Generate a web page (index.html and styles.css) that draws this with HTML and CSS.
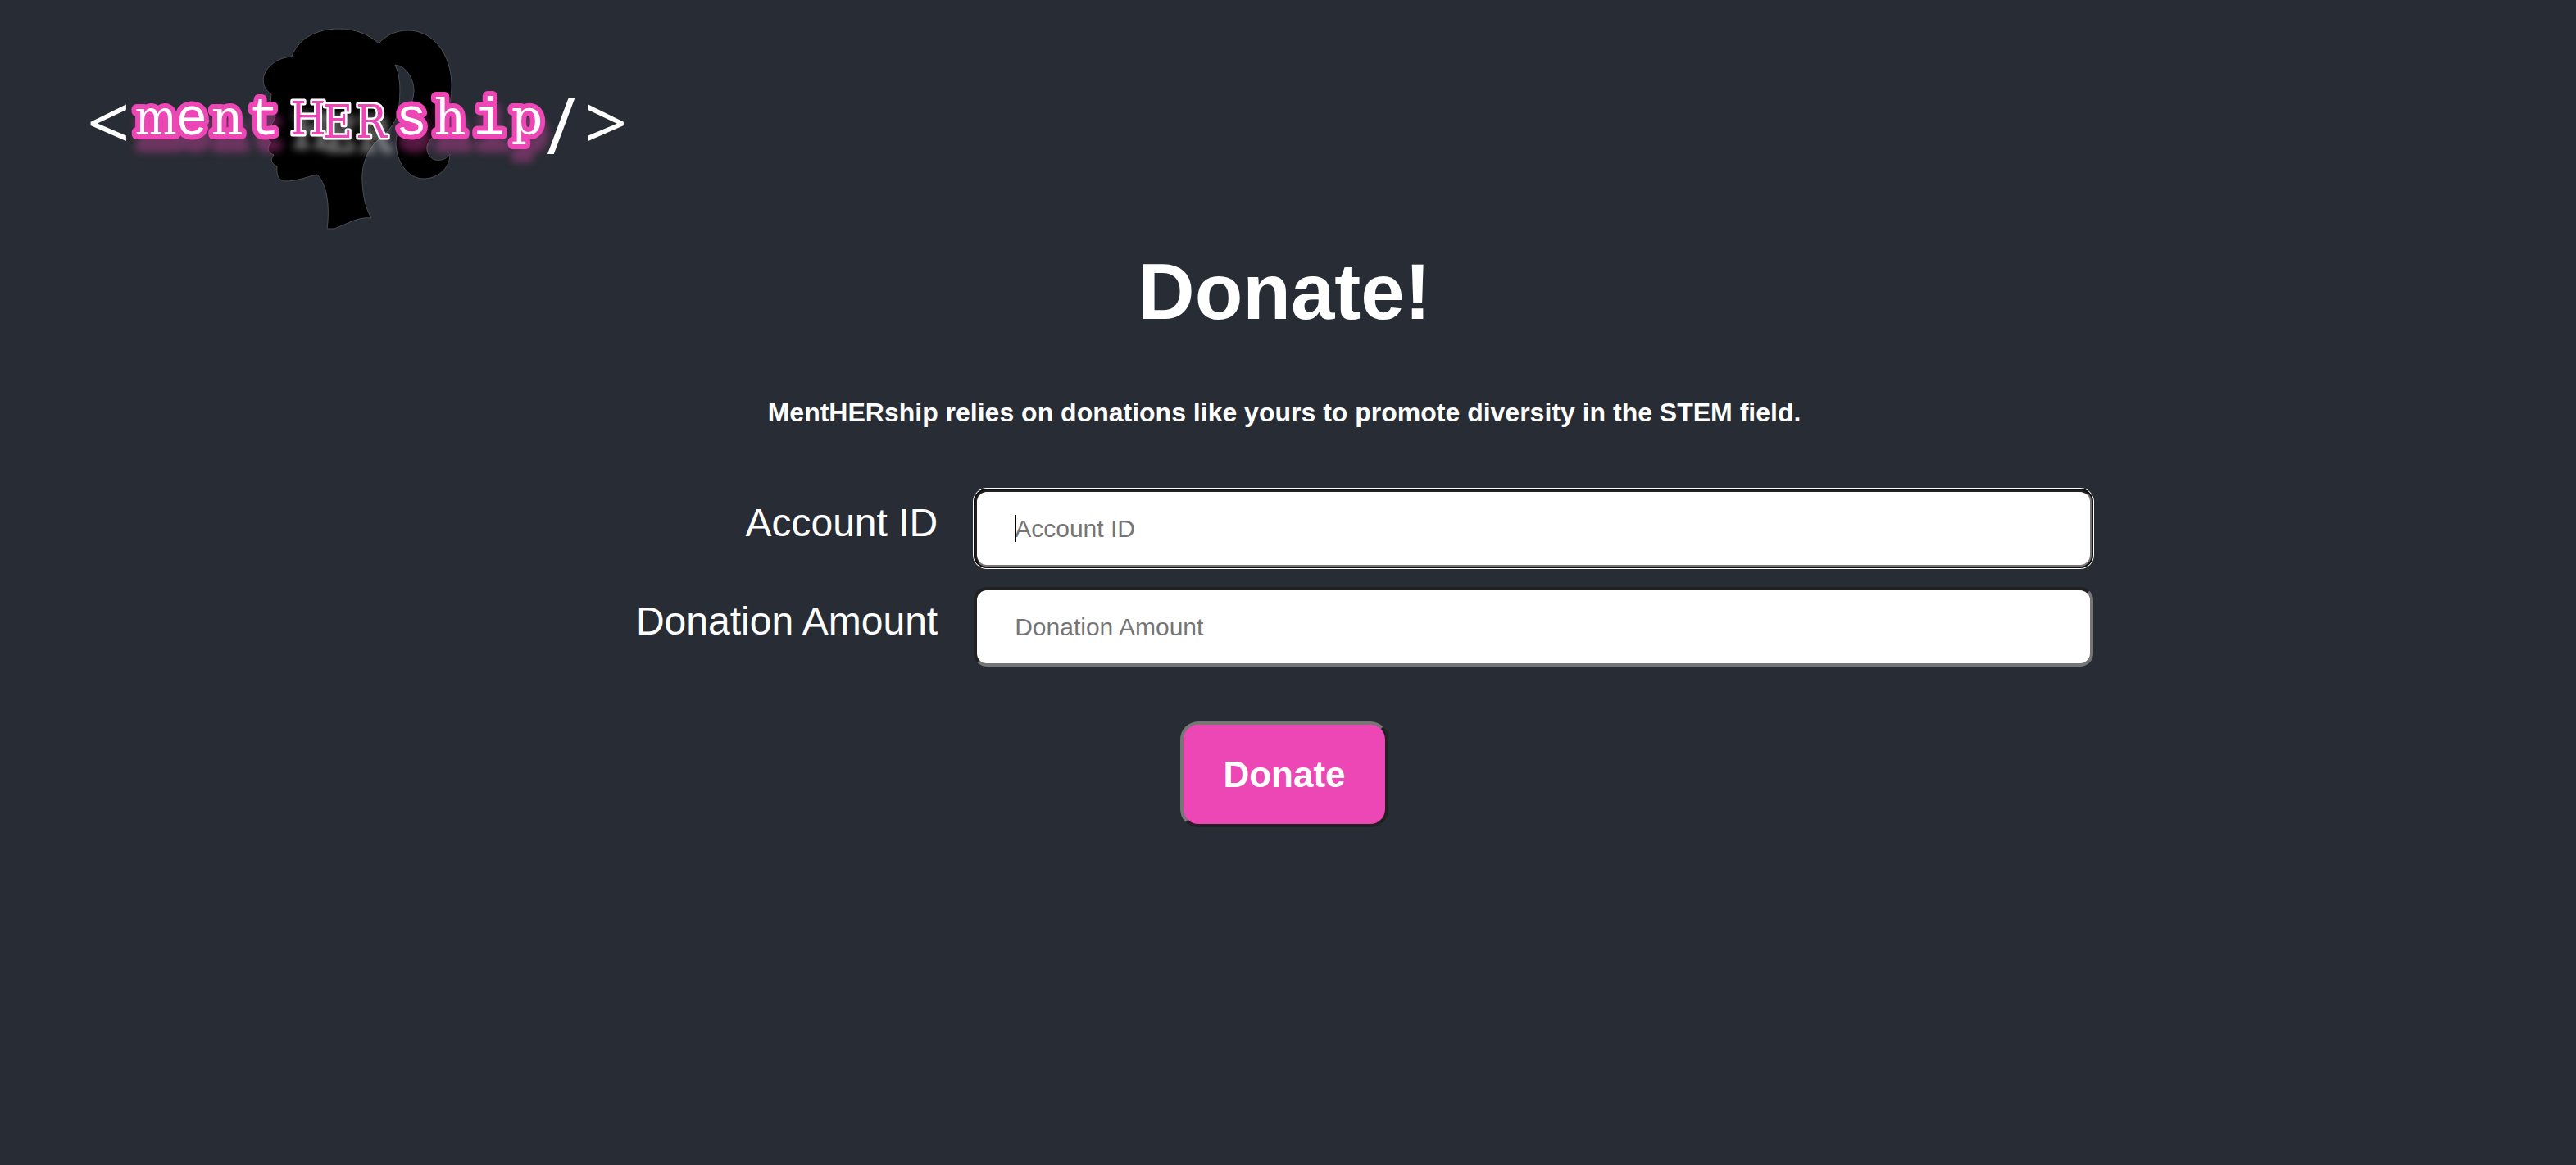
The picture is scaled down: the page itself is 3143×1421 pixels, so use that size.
FILE: index.html
```html
<!DOCTYPE html>
<html lang="en">
<head>
<meta charset="utf-8">
<title>MentHERship - Donate</title>
<link rel="stylesheet" href="styles.css">
</head>
<body>
<header class="site-header">
  <a class="logo-link" href="#" aria-label="MentHERship home">
    <svg class="logo" viewBox="100 30 670 256">
      <path class="head" d="M356 69C364 46 388 35 413 35C434 35 450 42 462 53C472 42 484 37 498 37C528 37 551 66 551 104C551 134 541 150 530 165C522 173 520 178 521 183C523 197 540 200 549 188C549 206 533 218 517 218C498 218 483 198 483 173C484 150 505 133 505 111C505 94 494 80 482 79C488 92 489 106 487 127C486 140 482 150 473 160L456 176C445 190 441 205 442 222C443 242 447 256 453 266C437 264 424 273 408 279H399C402 258 401 227 387 213C374 216 360 221 350 221C341 221 337 217 338 203C330 199 330 194 334 189C327 186 326 182 328 178L331 174L326 170C323 162 333 152 336 142C336 132 328 128 331 115C318 106 319 92 328 82C336 73 346 70 356 69Z"/>
      <text class="bracket" x="106" y="183">&lt;</text>
      <text class="slab" y="164" x="190 234 277 322">m<tspan class="mono">e</tspan><tspan class="wide">n</tspan><tspan class="mono">t</tspan></text>
      <text class="her" x="376 412 453" y="164 168 168">HER</text>
      <text class="slab" y="164" x="502 549 597 643"><tspan class="mono">s</tspan><tspan class="wide">h</tspan><tspan class="mono">i</tspan><tspan class="wide">p</tspan></text>
      <text class="bracket slash" x="667" y="188">/</text>
      <text class="bracket" x="713" y="183">&gt;</text>
    </svg>
  </a>
</header>
<main class="donate">
  <h1 class="title">Donate!</h1>
  <p class="lead">MentHERship relies on donations like yours to promote diversity in the STEM field.</p>
  <form class="form">
    <div class="row">
      <label class="label" for="account">Account ID</label>
      <div class="field">
        <input class="input input-active" id="account" type="text" placeholder="Account ID">
        <span class="caret"></span>
      </div>
    </div>
    <div class="row">
      <label class="label" for="amount">Donation Amount</label>
      <div class="field">
        <input class="input" id="amount" type="text" placeholder="Donation Amount">
      </div>
    </div>
    <button class="submit" type="submit">Donate</button>
  </form>
</main>
</body>
</html>
```
FILE: styles.css
```css
* {
  box-sizing: border-box;
}

body {
  margin: 0;
  padding-right: 9px;
  min-height: 100vh;
  background: #282c34;
  color: #fff;
  font-family: "Liberation Sans", Arial, sans-serif;
}

.site-header {
  padding: 30px 100px 0;
}

.logo-link {
  display: block;
  width: 670px;
}

.logo {
  display: block;
  width: 100%;
  overflow: visible;
}

.head {
  fill: #000;
  stroke: #4a4d55;
  stroke-width: 1;
}

.slab {
  fill: #fff;
  stroke: #ed46b5;
  stroke-width: 12px;
  stroke-linejoin: round;
  paint-order: stroke;
  font-family: "DejaVu Serif Condensed", "DejaVu Serif", serif;
  font-size: 60px;
  text-anchor: middle;
  filter: drop-shadow(4px 16px 5px rgba(237, 70, 181, 0.35));
}

.mono {
  font-family: "Liberation Mono", "Courier New", monospace;
  font-size: 64px;
}

.wide {
  font-family: "DejaVu Serif", serif;
}

.her {
  fill: #ed46b5;
  stroke: #fff;
  stroke-width: 5px;
  stroke-linejoin: round;
  paint-order: stroke;
  font-family: "DejaVu Serif Condensed", "DejaVu Serif", serif;
  font-size: 56px;
  text-anchor: middle;
  filter: drop-shadow(4px 16px 5px rgba(255, 255, 255, 0.4));
}

.bracket {
  fill: #fff;
  font-family: "Open Sans", "Noto Sans", sans-serif;
  font-size: 92px;
}

.slash {
  font-size: 96px;
}

.donate {
  display: flex;
  flex-direction: column;
  align-items: center;
}

.title {
  margin: 15px 0 0;
  font-size: 96px;
  line-height: 110px;
}

.lead {
  margin: 74px 0 0;
  font-size: 32px;
  font-weight: bold;
  line-height: 36px;
}

.form {
  display: flex;
  flex-direction: column;
  gap: 23px;
  width: 63%;
  margin-top: 75px;
}

.row {
  display: grid;
  grid-template-columns: 564fr 1365fr;
  gap: 44px;
}

.label {
  padding-top: 14px;
  font-size: 48px;
  line-height: 55px;
  text-align: right;
}

.field {
  position: relative;
}

.input {
  display: block;
  width: 100%;
  height: 97px;
  padding: 0 46px;
  border: 4px solid;
  border-color: #212121 #767676 #767676 #212121;
  border-radius: 16px;
  background: #fff;
  color: #000;
  font-family: inherit;
  font-size: 30px;
}

.input::placeholder {
  color: #757575;
}

.input-active {
  outline: 2px solid #101010;
  outline-offset: -2px;
  box-shadow: 0 0 0 1px #fff;
}

.caret {
  position: absolute;
  top: 32px;
  left: 50px;
  width: 2px;
  height: 33px;
  background: #000;
}

.submit {
  align-self: center;
  margin-top: 44px;
  padding: 36px 48px;
  border: 4px solid;
  border-color: #767676 #212121 #212121 #767676;
  border-radius: 22px;
  background: #ed46b5;
  color: #fff;
  font-family: inherit;
  font-size: 44px;
  font-weight: bold;
  line-height: 49px;
}
```
